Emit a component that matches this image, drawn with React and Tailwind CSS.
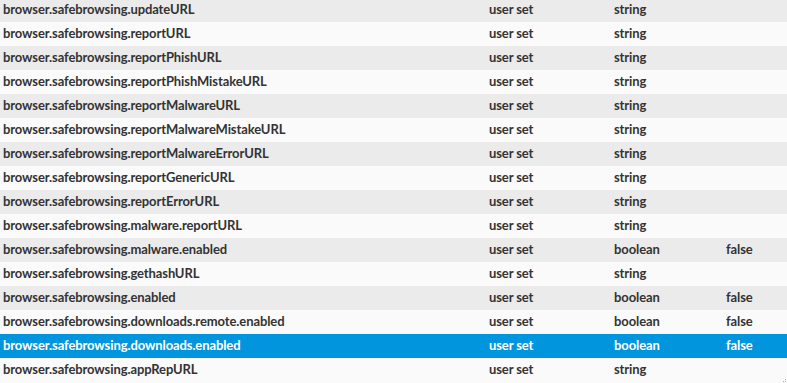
const rows = [
  ["browser.safebrowsing.updateURL", "string", ""],
  ["browser.safebrowsing.reportURL", "string", ""],
  ["browser.safebrowsing.reportPhishURL", "string", ""],
  ["browser.safebrowsing.reportPhishMistakeURL", "string", ""],
  ["browser.safebrowsing.reportMalwareURL", "string", ""],
  ["browser.safebrowsing.reportMalwareMistakeURL", "string", ""],
  ["browser.safebrowsing.reportMalwareErrorURL", "string", ""],
  ["browser.safebrowsing.reportGenericURL", "string", ""],
  ["browser.safebrowsing.reportErrorURL", "string", ""],
  ["browser.safebrowsing.malware.reportURL", "string", ""],
  ["browser.safebrowsing.malware.enabled", "boolean", "false"],
  ["browser.safebrowsing.gethashURL", "string", ""],
  ["browser.safebrowsing.enabled", "boolean", "false"],
  ["browser.safebrowsing.downloads.remote.enabled", "boolean", "false"],
  ["browser.safebrowsing.downloads.enabled", "boolean", "false"],
  ["browser.safebrowsing.appRepURL", "string", ""],
];

export default function App() {
  return (
    <div className="relative w-[787px] h-[383px] overflow-hidden bg-[#fafafa]">
      <div className="-mt-[2px] flex flex-col text-[13px] font-bold tracking-[-0.1px]" style={{ fontFamily: "Lato, 'Open Sans', sans-serif" }}>
        {rows.map(([name, type, value], i) => {
          const selected = i === 14;
          const bg = selected ? "bg-[#0095dd] text-white" : i % 2 === 0 ? "bg-[#ebebeb] text-[#333]" : "bg-[#fafafa] text-[#333]";
          return (
            <div key={name} className={`grid grid-cols-[486px_125px_112px_1fr] h-[24px] items-center pl-[3px] ${bg}`}>
              <span className="whitespace-nowrap">{name}</span>
              <span>user set</span>
              <span>{type}</span>
              <span>{value}</span>
            </div>
          );
        })}
      </div>
      <div className="absolute right-[1px] bottom-[1px] grid grid-cols-2 gap-[1px]">
        <span className="w-[1px] h-[1px]" />
        <span className="w-[1px] h-[1px] bg-[#aaa]" />
        <span className="w-[1px] h-[1px] bg-[#aaa]" />
        <span className="w-[1px] h-[1px] bg-[#aaa]" />
      </div>
    </div>
  );
}
